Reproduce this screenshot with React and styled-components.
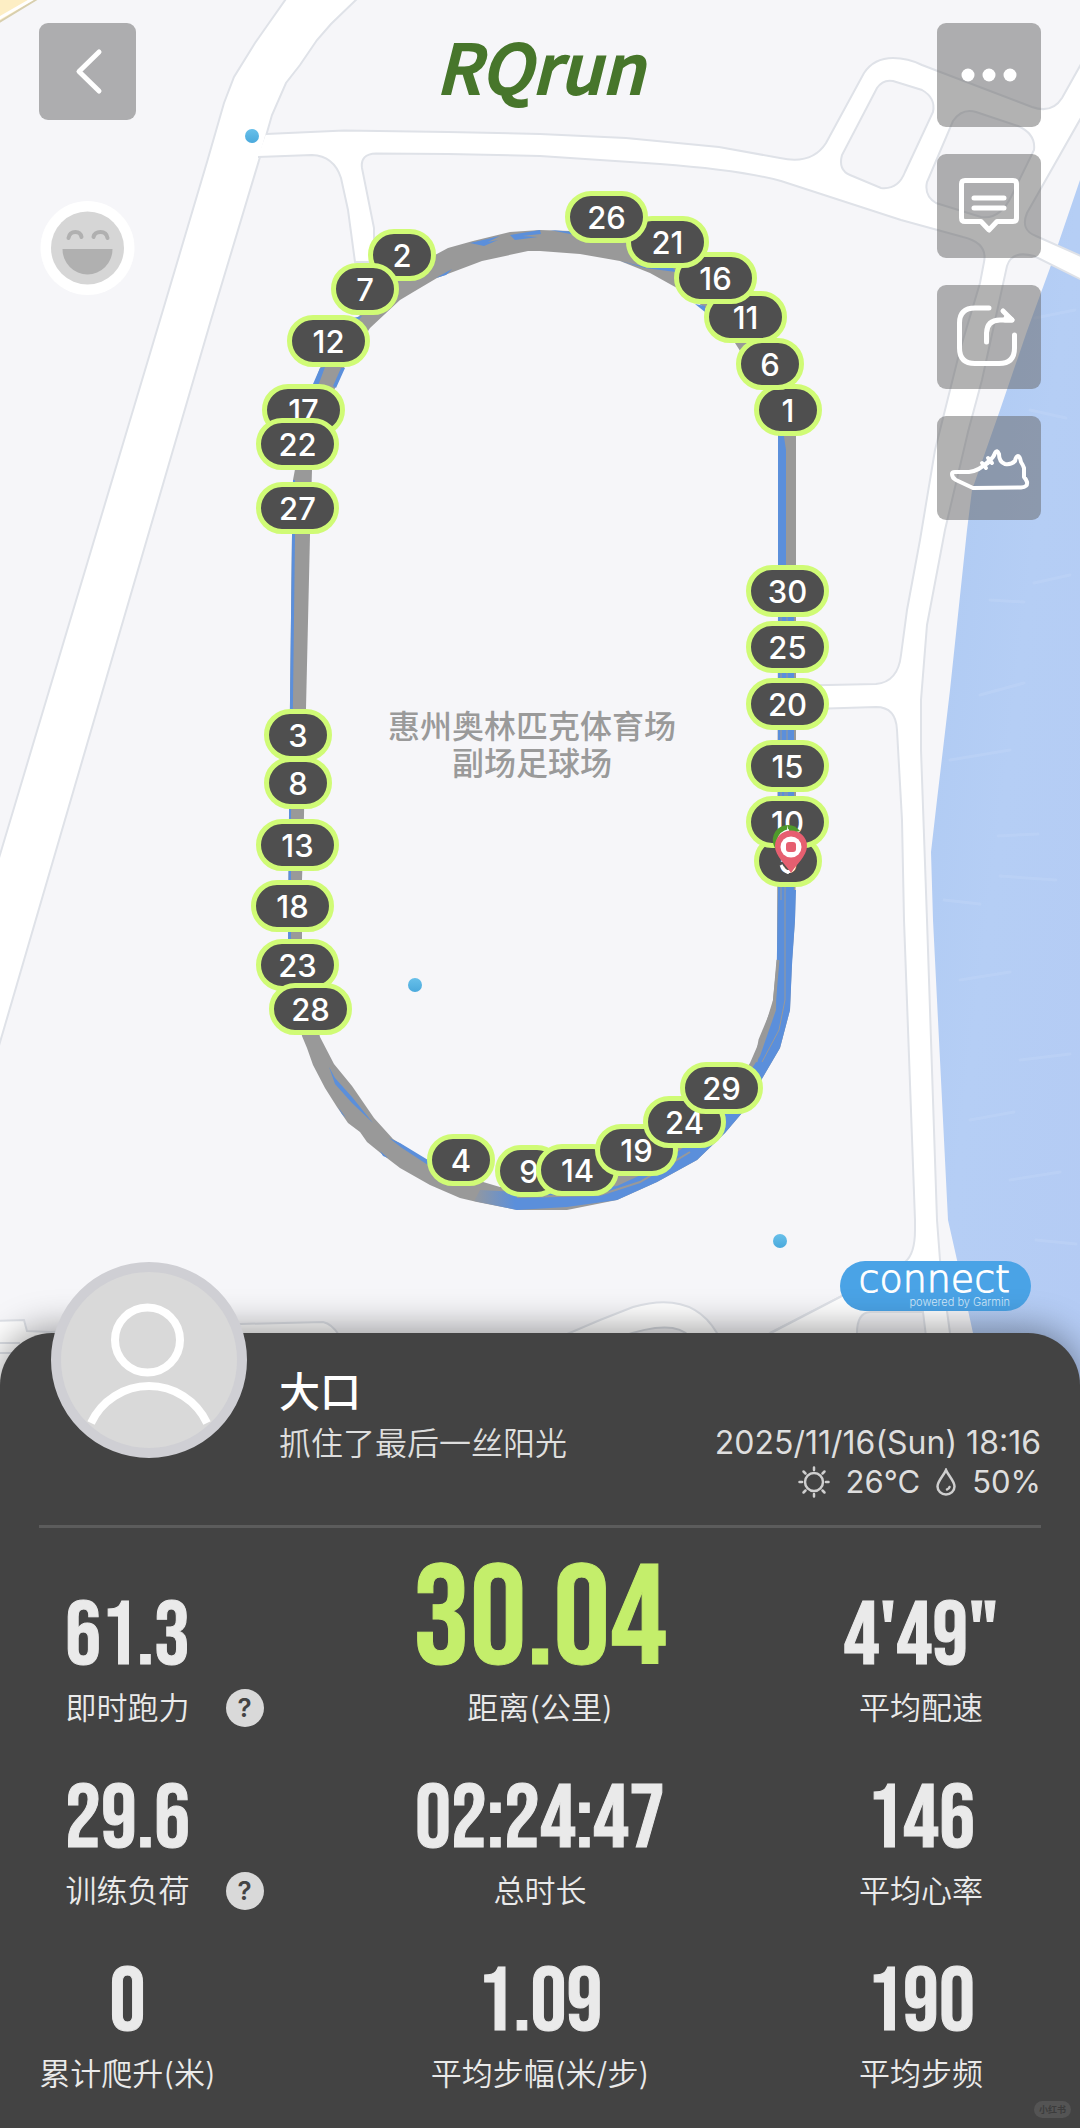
import React from "react";
import styled, { createGlobalStyle } from "styled-components";

const CJK = '"Noto Sans CJK SC", sans-serif';
const MAP_WIDTH = 1080;
const MAP_HEIGHT = 1385;

const GlobalStyle = createGlobalStyle`
  *, *::before, *::after { box-sizing: border-box; }
  body {
    margin: 0;
    background: #434343;
    font-family: Inter, ${CJK};
  }
  button {
    padding: 0;
    border: 0;
    font: inherit;
    cursor: pointer;
  }
`;

const Page = styled.main`
  display: flex;
  flex-direction: column;
`;

/* ---------- Map ---------- */

const MapSection = styled.section`
  display: grid;
  background: #f6f6f9;

  > * {
    grid-area: 1 / 1;
  }
`;

const MapCanvas = styled.div`
  position: relative;
  aspect-ratio: ${MAP_WIDTH} / ${MAP_HEIGHT};
  overflow: hidden;
`;

const MapDrawing = styled.svg`
  display: block;
  width: 100%;
  height: 100%;
`;

const Marker = styled.span`
  position: absolute;
  left: ${(p) => (p.$x / MAP_WIDTH) * 100}%;
  top: ${(p) => (p.$y / MAP_HEIGHT) * 100}%;
  width: ${(p) => (p.$wide ? 83 : 68)}px;
  height: 52px;
  margin: -26px 0 0 ${(p) => (p.$wide ? -42 : -34)}px;
  border: 5px solid #d0fb76;
  border-radius: 26px;
  background: #4f4f4f;
  color: #fff;
  font-size: 31px;
  font-weight: 500;
  line-height: 43px;
  text-align: center;
`;

const Dot = styled.span`
  position: absolute;
  left: ${(p) => (p.$x / MAP_WIDTH) * 100}%;
  top: ${(p) => (p.$y / MAP_HEIGHT) * 100}%;
  width: 14px;
  height: 14px;
  margin: -7px 0 0 -7px;
  border-radius: 50%;
  background: linear-gradient(#68c0ea, #4aa9dc);
`;

const PlaceName = styled.p`
  position: absolute;
  left: 49.26%;
  top: 51.12%;
  width: 320px;
  margin: 0 0 0 -160px;
  color: #9a9a9a;
  font-size: 32px;
  font-weight: 500;
  line-height: 37px;
  text-align: center;
  white-space: nowrap;
`;

const PinDrawing = styled.svg`
  position: absolute;
  left: ${(772 / MAP_WIDTH) * 100}%;
  top: ${(824 / MAP_HEIGHT) * 100}%;
  width: 36px;
  height: 50px;
`;

const MapOverlay = styled.div`
  z-index: 1;
  display: flex;
  flex-direction: column;
  justify-content: space-between;
  padding: 23px 39px 74px;
`;

const TopBar = styled.header`
  display: grid;
  grid-template-columns: 1fr auto 1fr;
  align-items: start;
`;

const LeftTools = styled.div`
  display: flex;
  flex-direction: column;
  align-items: flex-start;
  gap: 81px;
`;

const RightTools = styled.div`
  display: flex;
  flex-direction: column;
  align-items: flex-end;
  gap: 27px;
`;

const ToolButton = styled.button`
  display: grid;
  place-items: center;
  width: ${(p) => p.$size}px;
  height: ${(p) => p.$size}px;
  border-radius: 9px;
  background: rgba(97, 97, 97, 0.49);
  color: #fff;
`;

const MoodButton = styled.button`
  width: 97px;
  height: 94px;
  background: none;
`;

const ToolIcon = styled.svg`
  display: block;
  fill: none;
  stroke: currentColor;
  stroke-linecap: round;
  stroke-linejoin: round;
`;

const Brand = styled.h1`
  margin: 0;
  color: #47762b;
  font-family: ${CJK};
  font-size: 68px;
  font-style: italic;
  font-weight: 500;
  line-height: 84px;
  -webkit-text-stroke: 2px #47762b;
`;

const ConnectBadge = styled.div`
  align-self: flex-end;
  display: flex;
  flex-direction: column;
  align-items: flex-end;
  width: 191px;
  height: 50px;
  margin-right: 10px;
  padding: 0 21px;
  border-radius: 25px;
  background: #4aa3e6;
  color: #fff;
`;

const ConnectName = styled.span`
  font-family: "DejaVu Sans Light", "DejaVu Sans", sans-serif;
  font-size: 38px;
  font-weight: 200;
  line-height: 36px;
  -webkit-text-stroke: 1px #fff;
`;

const ConnectNote = styled.span`
  color: #d3eafb;
  font-size: 11px;
  font-weight: 300;
  line-height: 11px;
`;

/* ---------- Panel ---------- */

const Panel = styled.section`
  position: relative;
  z-index: 2;
  margin-top: -52px;
  padding-bottom: 34px;
  border-radius: 52px 52px 0 0;
  background: #434343;
  box-shadow: 0 -4px 36px rgba(0, 0, 0, 0.4);
  color: #eaeaea;
`;

const Profile = styled.header`
  display: flex;
  align-items: flex-start;
  margin: 0 39px;
  padding: 33px 0 24px 12px;
  border-bottom: 3px solid #5c5c5c;
`;

const Avatar = styled.div`
  flex: none;
  width: 196px;
  height: 196px;
  margin: -104px 32px -24px 0;
  border: 10px solid #cfcfd4;
  border-radius: 50%;
  background: #d9d9d9;
`;

const Identity = styled.div`
  flex: 1;
`;

const UserName = styled.h2`
  margin: 0;
  color: #fff;
  font-size: 41px;
  font-weight: 500;
  line-height: 52px;
`;

const RunTitle = styled.p`
  margin: 6px 0 0;
  color: #dedede;
  font-size: 32px;
  font-weight: 350;
  line-height: 39px;
`;

const Meta = styled.div`
  padding-top: 57px;
  color: #dedede;
  font-size: 32px;
  line-height: 39px;
  text-align: right;
`;

const Weather = styled.div`
  display: flex;
  align-items: center;
  justify-content: flex-end;
  gap: 16px;
  font-size: 31px;
`;

const WeatherIcon = styled.svg`
  fill: none;
  stroke: #cfcfcf;
  stroke-linecap: round;
`;

const Stats = styled.dl`
  display: grid;
  grid-template-columns: 255fr 570fr 192fr;
  margin: 0;
  padding: 32px 63px 0 0;
  row-gap: 47px;
`;

const Stat = styled.div`
  display: flex;
  flex-direction: column-reverse;
  align-items: center;
  justify-content: flex-start;
  gap: 6px;
`;

const StatValue = styled.dd`
  margin: 0;
  color: ${(p) => (p.$main ? "#c4ee6b" : "#eaeaea")};
  font-family: "Bebas Neue", "Roboto Condensed", sans-serif;
  font-size: ${(p) => (p.$main ? 142 : 90)}px;
  line-height: ${(p) => (p.$main ? 123 : 92)}px;
  white-space: nowrap;
  -webkit-text-stroke: 1px currentColor;
`;

const StatLabel = styled.dt`
  position: relative;
  font-size: 31px;
  font-weight: 350;
  line-height: 38px;
  white-space: nowrap;
`;

const HelpButton = styled.button`
  position: absolute;
  left: 100%;
  top: 0;
  width: 38px;
  height: 38px;
  margin-left: 36px;
  border-radius: 50%;
  background: #d9d9d9;
  color: #434343;
  font-family: Inter, sans-serif;
  font-size: 26px;
  font-weight: 600;
  line-height: 38px;
`;

const Watermark = styled.small`
  position: absolute;
  right: 9px;
  bottom: 9px;
  width: 37px;
  height: 17px;
  border-radius: 9px;
  background: #545454;
  color: #3c3c3c;
  font-family: ${CJK};
  font-size: 9px;
  font-weight: 700;
  line-height: 17px;
  text-align: center;
`;

/* ---------- Data ---------- */

const markers = [
  [1, 788, 410], [2, 402, 255], [3, 298, 735], [4, 461, 1160], [5, 788, 861],
  [6, 770, 364], [7, 365, 289], [8, 298, 783], [9, 529, 1171], [10, 788, 822],
  [11, 746, 317], [12, 329, 341], [13, 298, 845], [14, 578, 1170], [15, 788, 766],
  [16, 716, 278], [17, 304, 410], [18, 293, 906], [19, 637, 1150], [20, 788, 704],
  [21, 668, 242], [22, 298, 444], [23, 298, 965], [24, 685, 1122], [25, 788, 647],
  [26, 607, 217], [27, 298, 508], [28, 311, 1009], [29, 722, 1088], [30, 788, 591],
];

const dots = [[252, 136], [415, 985], [780, 1241]];

const stats = [
  { value: "61.3", label: "即时跑力", help: true },
  { value: "30.04", label: "距离(公里)", main: true },
  { value: "4'49\"", label: "平均配速" },
  { value: "29.6", label: "训练负荷", help: true },
  { value: "02:24:47", label: "总时长" },
  { value: "146", label: "平均心率" },
  { value: "0", label: "累计爬升(米)" },
  { value: "1.09", label: "平均步幅(米/步)" },
  { value: "190", label: "平均步频" },
];

/* ---------- Drawings ---------- */

function MapArt() {
  const road = { fill: "#fff", stroke: "#dfe2e8", strokeWidth: 2 };
  return (
    <MapDrawing viewBox="0 0 1080 1385" preserveAspectRatio="xMidYMin slice" aria-hidden="true">
      <defs>
        <linearGradient id="water" x1="0" y1="0" x2="1" y2="1">
          <stop offset="0" stopColor="#adc9f2" />
          <stop offset="0.5" stopColor="#b5cef5" />
          <stop offset="1" stopColor="#b4cbf4" />
        </linearGradient>
        <linearGradient id="fade" gradientUnits="userSpaceOnUse" x1="470" y1="0" x2="515" y2="0">
          <stop offset="0" stopColor="#999" />
          <stop offset="1" stopColor="#5b8fdb" />
        </linearGradient>
      </defs>
      <rect width="1080" height="1385" fill="#f6f6f9" />
      <path d="M-4 -4H42L-4 24Z" fill="#fdeec4" stroke="#d8cfae" strokeWidth="2" />
      <path d="M-4 20L36 -3" stroke="#fff" strokeWidth="3" />

      {/* river */}
      <path d="M1080 180L1050 268L1027 331L1000 410L972 490L967 530L950 690L937 800L931 852L933 920L948 1220L957 1260L973 1333L984 1385H1080Z" fill="url(#water)" />
      <path
        d="M1035 318l40-8M1030 410l36 8M1034 583l36-8M990 600l34 2M980 695l44-12M950 760l60-10M998 836l40-2M1000 876l56 4M944 900l36 4M960 980l50-8M1020 1060l50-6M970 1120l44-8M1010 1180l50-8M1036 1240l40 4"
        fill="none"
        stroke="#c3d8f8"
        strokeWidth="3"
        strokeLinecap="round"
        opacity="0.4"
      />

      {/* highway on the left */}
      <path d="M288 -4L269 23L255 43L234 77L224 103L207 162L160 320L-4 868V1056L211 320L260 157L272 115L286 83L300 65L317 40L331 24L360 -4Z" {...road} />

      {/* road running east to the bridge, with the lane going south */}
      <path
        d="M266 134L344 130.500L448 132L540 134L626 138L719 147L780 158Q812 165 826 143L864 73Q874 58 893 58Q908 58 922 65L1032 107Q1052 114 1062 98L1090 48V102L1027 213Q1020 230 1036 236L1090 260V284L1034 256Q1012 250 1007 266L982 380L968 432L945 530L927 625L921 700V750L927 920L937 1220L940 1260L950 1333L960 1390H840Q846 1340 855 1328L770 1333L840 1297L905 1262Q915 1254 915 1230V1220L904 920L902 820L897 730Q896 707 876 707L780 710V686L876 684Q898 682 901 655L907 610L920 540L935 450L960 350L980 283L984 262Q988 243 963 237L901 220L781 181Q740 170 660 164L540 156L448 154L376 153.500Q360 154 362 168L374 228V262H355L348 210L341 178Q334 156 312 155L258 157"
        {...road}
      />
      <path d="M877 88Q883 79 893 81L922 90Q936 98 933 112L905 172Q898 190 881 188L850 175Q838 170 842 155Z" fill="#f6f6f9" stroke="#dfe2e8" strokeWidth="2" />
      <path d="M953 121Q962 108 976 112L1018 126Q1036 134 1034 150L1012 195Q1000 220 981 217L936 203Q924 196 927 182Z" fill="#f6f6f9" stroke="#dfe2e8" strokeWidth="2" />

      {/* lanes along the bottom edge */}
      <path d="M600 1320L633 1307Q692 1290 717 1333L740 1385H540L560 1337Z" {...road} />
      <path d="M620 1337Q674 1318 690 1337L700 1385H610Z" fill="#f0f0f3" stroke="#d5d8de" strokeWidth="2" />
      <path d="M770 1333L840 1297L905 1262L930 1262L945 1385H740Z" fill="#fff" />
      <path d="M767 1335L840 1297L905 1262" fill="none" stroke="#dfe2e8" strokeWidth="2" />
      <path d="M857 1385V1333Q857 1313 870 1312H923L932 1385Z" fill="#f2f2f5" stroke="#dfe2e8" strokeWidth="2" />
      <path d="M-4 1321L24 1320L27 1331L50 1332L240 1324L323 1322Q332 1324 339 1335V1385H-4Z" {...road} />
      <path d="M0 1343H20M0 1353H16" stroke="#dfe2e8" strokeWidth="2" />

      {/* recorded laps */}
      <path
        fill="#999"
        fillRule="evenodd"
        d="M540 230L510 232L473 241L448 248L435 255L390 285L350 325L320 368L308 400L293 480L292 535L290 700L289 815L288 935L302 1036L307 1048L313 1065L325 1088L337 1107L348 1123L360 1132L367 1142L383 1155L400 1168L430 1185L460 1198L477 1202L517 1210H567L617 1200L657 1182L697 1160L725 1133L742 1113L763 1077L780 1048L790 1010L792 960L795 920L796 860V430L790 400L775 365L750 322L720 290L680 262L640 244L600 234L570 231Z
           M540 251L580 254L620 261L650 273L677 288L705 308L735 343L762 385L778 430V600L777 960L773 1000L763 1033L750 1063L730 1095L700 1130L660 1162L615 1177L600 1184L530 1188L500 1187L483 1182L428 1162L393 1139L374 1118L352 1086L334 1064L320 1037L302 960V880L304 815L306 708L310 535L312 470L322 420L335 388L344 368L370 328L400 300L415 291L437 278L482 261L528 251Z"
      />
      <path d="M778 890H796L795 920L792 965L790 1010L780 1048L763 1077L742 1113L725 1133L697 1160L657 1182L617 1200L567 1207L517 1210L474 1201L480 1190L560 1194L617 1186L660 1166L700 1134L734 1096L760 1056L776 1010Z" fill="url(#fade)" />
      <g fill="#5b8fdb">
        <path d="M778 430H783L786 450V592H794V900H778Z" />
        <path d="M293 480H295V535L293 700L291 815L291 940H288L289 815L290 700L292 535Z" />
        <path d="M320 368L325 367L318 386L313 384ZM341 368H345L336 388L333 386Z" />
        <path d="M353 318L362 316L354 325ZM470 243L500 236L488 242L498 240L484 246ZM510 235L540 230L541 234L522 236L538 237L515 240ZM550 230L575 232L600 236L570 234ZM620 261L650 268L670 264L676 272L645 268ZM695 304L705 306L705 312ZM436 278L452 269L446 275Z" />
        <path d="M329 1067L335 1078L352 1097L373 1123L352 1103L335 1084ZM389 1138L400 1143L428 1160V1165L402 1148Z" />
        <path d="M338 1107L346 1118L342 1114ZM380 1151L388 1158L383 1156Z" />
      </g>
      <g fill="none" stroke="#999" strokeWidth="1">
        <path d="M781 592V900M785 760V1000L779 1030L762 1062M787 592V820" />
        <path d="M778 960L774 1006L760 1040L756 1062" strokeWidth="3" />
        <path d="M517 1197L600 1195L640 1182L690 1152" strokeWidth="2" />
      </g>
    </MapDrawing>
  );
}

function Pin() {
  return (
    <PinDrawing viewBox="0 0 36 50" aria-hidden="true">
      <path d="M16 1A15 15 0 0 0 2 22L8 34Z" fill="#4f9a2b" />
      <path d="M16 1A15 15 0 0 1 28 7L16 10Z" fill="#4f9a2b" />
      <path d="M6 16Q8 8 17 6" fill="none" stroke="#fff" strokeWidth="2" />
      <path d="M19 49C14 41 3 32 3 22A16 15.500 0 0 1 35 22C35 32 24 41 19 49Z" fill="#e65f70" />
      <circle cx="19" cy="23" r="10.500" fill="#fff" />
      <rect x="14" y="18" width="10" height="10" rx="3" fill="#e65f70" />
      <path d="M9 41Q12 47 17 49" fill="none" stroke="#fff" strokeWidth="3" />
    </PinDrawing>
  );
}

function Face() {
  return (
    <svg width="97" height="94" viewBox="0 0 97 94" aria-hidden="true">
      <circle cx="48.500" cy="47" r="47" fill="#fff" />
      <circle cx="48.500" cy="47" r="36.500" fill="#d6d6d6" />
      <path d="M23.500 48H73.500A25 25.500 0 0 1 23.500 48Z" fill="#b0b0b0" />
      <path d="M29.500 37Q30.500 31 36.500 31Q41.500 31 42.500 36M54.500 36Q55.500 31 61.500 31Q67.500 31 68.500 37" fill="none" stroke="#b0b0b0" strokeWidth="4" strokeLinecap="round" />
    </svg>
  );
}

function Person() {
  return (
    <svg width="176" height="176" viewBox="0 0 176 176" aria-hidden="true">
      <g fill="none" stroke="#fff" strokeWidth="8">
        <circle cx="86.500" cy="68" r="32.500" />
        <path d="M30 151A64 64 0 0 1 146 151" />
      </g>
    </svg>
  );
}

function Sun() {
  return (
    <WeatherIcon width="32" height="32" viewBox="0 0 32 32" strokeWidth="2.500" aria-hidden="true">
      <circle cx="16" cy="16" r="9" />
      <path d="M16 1.500v2.500M16 28v2.500M1.500 16h2.500M28 16h2.500M5.500 5.500l2 2M24.500 24.500l2 2M26.500 5.500l-2 2M7.500 24.500l-2 2" />
    </WeatherIcon>
  );
}

function Drop() {
  return (
    <WeatherIcon width="20" height="28" viewBox="0 0 20 28" strokeWidth="2.500" aria-hidden="true">
      <path d="M10 2C7.500 8 1.500 13 1.500 18.500A8.500 8 0 0 0 18.500 18.500C18.500 13 12.500 8 10 2Z" />
      <path d="M13.500 19Q13 21 11 21.500" />
    </WeatherIcon>
  );
}

/* ---------- Page ---------- */

export default function App() {
  return (
    <>
      <GlobalStyle />
      <Page>
        <MapSection aria-label="跑步路线">
          <MapCanvas>
            <MapArt />
            <PlaceName>
              惠州奥林匹克体育场
              <br />
              副场足球场
            </PlaceName>
            {dots.map(([x, y]) => (
              <Dot key={x} $x={x} $y={y} />
            ))}
            {markers.map(([km, x, y]) => (
              <Marker key={km} $x={x} $y={y} $wide={km > 9}>
                {km}
              </Marker>
            ))}
            <Pin />
          </MapCanvas>

          <MapOverlay>
            <TopBar>
              <LeftTools>
                <ToolButton $size={97} aria-label="返回">
                  <ToolIcon width="97" height="97" viewBox="0 0 97 97" strokeWidth="5">
                    <path d="M60 29L40 48.500L60 68" />
                  </ToolIcon>
                </ToolButton>
                <MoodButton aria-label="心情">
                  <Face />
                </MoodButton>
              </LeftTools>
              <Brand>RQrun</Brand>
              <RightTools>
                <ToolButton $size={104} aria-label="更多">
                  <ToolIcon width="104" height="104" viewBox="0 0 104 104">
                    <g fill="#fff" stroke="none">
                      <circle cx="31" cy="52" r="6.500" />
                      <circle cx="52" cy="52" r="6.500" />
                      <circle cx="73" cy="52" r="6.500" />
                    </g>
                  </ToolIcon>
                </ToolButton>
                <ToolButton $size={104} aria-label="评论">
                  <ToolIcon width="104" height="104" viewBox="0 0 104 104" strokeWidth="5">
                    <path d="M28 26.500H76Q79.500 26.500 79.500 30V64Q79.500 67.500 76 67.500H60L52 76L44 67.500H28Q24.500 67.500 24.500 64V30Q24.500 26.500 28 26.500Z" />
                    <path d="M37 44H67M37 54H67" />
                  </ToolIcon>
                </ToolButton>
                <ToolButton $size={104} aria-label="分享">
                  <ToolIcon width="104" height="104" viewBox="0 0 104 104" strokeWidth="5">
                    <path d="M52 23H38Q22.500 23 22.500 38V63Q22.500 78.500 38 78.500H62Q77.500 78.500 77.500 63V50" />
                    <path d="M49.500 57V48Q50 35 63 35H75L66 26" />
                    <path d="M70 31L75 35H68Z" fill="#fff" />
                  </ToolIcon>
                </ToolButton>
                <ToolButton $size={104} aria-label="跑鞋">
                  <ToolIcon width="104" height="104" viewBox="0 0 104 104" strokeWidth="4">
                    <path d="M15 58Q15 62 19 64L36 72L84 71.500Q91 71 90 66Q89 63 87 61V52Q86 49 84 46Q83 40 81 40Q79 40 78 45Q74 49 68 48Q62 46 62 38Q60 33 58 37Q57 41 52 45Q42 55 32 56Q22 56 18 56Q15 56 15 58Z" />
                    <path d="M45 47L49 52M51 42L55 47M46 50L51 47" />
                  </ToolIcon>
                </ToolButton>
              </RightTools>
            </TopBar>
            <ConnectBadge>
              <ConnectName>connect</ConnectName>
              <ConnectNote>powered by Garmin</ConnectNote>
            </ConnectBadge>
          </MapOverlay>
        </MapSection>

        <Panel>
          <Profile>
            <Avatar>
              <Person />
            </Avatar>
            <Identity>
              <UserName>大口</UserName>
              <RunTitle>抓住了最后一丝阳光</RunTitle>
            </Identity>
            <Meta>
              <time dateTime="2025-11-16T18:16">2025/11/16(Sun) 18:16</time>
              <Weather>
                <Sun />
                <span>26°C</span>
                <Drop />
                <span>50%</span>
              </Weather>
            </Meta>
          </Profile>
          <Stats>
            {stats.map((s) => (
              <Stat key={s.label}>
                <StatLabel>
                  {s.label}
                  {s.help && <HelpButton aria-label={`${s.label}说明`}>?</HelpButton>}
                </StatLabel>
                <StatValue $main={s.main}>{s.value}</StatValue>
              </Stat>
            ))}
          </Stats>
          <Watermark>小红书</Watermark>
        </Panel>
      </Page>
    </>
  );
}
